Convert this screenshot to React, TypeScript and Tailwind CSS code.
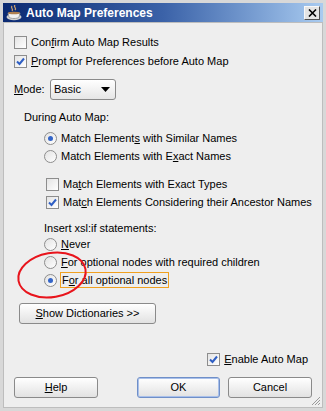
import React from 'react';

function Check({ checked }: { checked?: boolean }) {
  return (
    <div className="w-[13px] h-[13px] shrink-0 border border-[#8d8d8d] bg-gradient-to-br from-[#e4e4e4] to-white flex items-center justify-center">
      {checked && (
        <svg width="9" height="9" viewBox="0 0 9 9">
          <path d="M1 4.5 L3.5 7 L8 1.5" stroke="#2f5fc4" strokeWidth="2" fill="none" />
        </svg>
      )}
    </div>
  );
}

function Radio({ checked }: { checked?: boolean }) {
  return (
    <div className="w-[13px] h-[13px] shrink-0 rounded-full border border-[#8d8d8d] bg-gradient-to-br from-[#e2e2e2] to-white flex items-center justify-center">
      {checked && <div className="w-[5px] h-[5px] rounded-full bg-[#3465c8]" />}
    </div>
  );
}

function Btn({ children, w, ok }: { children: React.ReactNode; w: string; ok?: boolean }) {
  return (
    <div
      className={`${w} h-[21px] rounded-[3px] border ${ok ? 'border-[#6f8fc8] ring-1 ring-inset ring-[#a9c0ea]' : 'border-[#8a8a8a]'} bg-gradient-to-b from-white to-[#e2e2e2] flex items-center justify-center text-black`}
    >
      {children}
    </div>
  );
}

export default function App() {
  return (
    <div className="w-[326px] h-[411px] bg-[#d8d8d8] p-[3px] flex flex-col font-['Liberation_Sans',Arial,sans-serif] text-[11px] text-black leading-none select-none">
      {/* title bar */}
      <div className="h-[19px] shrink-0 flex items-center bg-gradient-to-r from-[#0b2a72] via-[#3b62a8] to-[#a9cbf0] pl-[2px] pr-[3px]">
        <svg width="18" height="16" viewBox="0 0 18 16" className="shrink-0">
          <path d="M7 1 C5 3 9 4 7 6" stroke="#c8a070" strokeWidth="1.3" fill="none" />
          <path d="M10 0 C8 2 12 3 10 5" stroke="#c8a070" strokeWidth="1.3" fill="none" />
          <ellipse cx="9" cy="12" rx="7.5" ry="3.2" fill="#d0d0d0" />
          <path d="M3 8 L15 8 L14 12 C13 14 5 14 4 12 Z" fill="#f2f2f2" stroke="#909090" strokeWidth="0.8" />
          <ellipse cx="9" cy="8" rx="6" ry="1.3" fill="#b08050" />
        </svg>
        <span className="ml-[3px] text-white font-bold text-[12px]">Auto Map Preferences</span>
        <div className="ml-auto w-[16px] h-[14px] bg-[#e4e4e4] border border-[#f8f8f8] border-r-[#505050] border-b-[#505050] flex items-center justify-center">
          <svg width="9" height="8" viewBox="0 0 9 8">
            <path d="M1 0.5 L8 7.5 M8 0.5 L1 7.5" stroke="#000" strokeWidth="1.6" />
          </svg>
        </div>
      </div>

      {/* body */}
      <div className="relative flex-1 bg-[#eeeeee] border border-[#bdbdbd] flex flex-col pt-[10px]">
        <div className="h-[19px] flex items-center pl-[10px] gap-[4px]">
          <Check />
          <span>Con<u>f</u>irm Auto Map Results</span>
        </div>
        <div className="h-[19px] flex items-center pl-[10px] gap-[4px]">
          <Check checked />
          <span><u>P</u>rompt for Preferences before Auto Map</span>
        </div>

        <div className="mt-[8px] flex items-center pl-[10px]">
          <span className="w-[36px]"><u>M</u>ode:</span>
          <div className="w-[66px] h-[21px] rounded-[3px] border border-[#8a8a8a] bg-gradient-to-b from-white to-[#e6e6e6] flex items-center pl-[3px] pr-[5px]">
            <span>Basic</span>
            <svg width="9" height="5" viewBox="0 0 9 5" className="ml-auto">
              <path d="M0 0 L9 0 L4.5 5 Z" fill="#000" />
            </svg>
          </div>
        </div>

        <div className="mt-[9px] h-[16px] flex items-center pl-[20px]">During Auto Map:</div>
        <div className="mt-[4px] h-[18px] flex items-center pl-[40px] gap-[4px]">
          <Radio checked />
          <span>Match Element<u>s</u> with Similar Names</span>
        </div>
        <div className="h-[18px] flex items-center pl-[40px] gap-[4px]">
          <Radio />
          <span>Match Elements with E<u>x</u>act Names</span>
        </div>

        <div className="mt-[10px] h-[18px] flex items-center pl-[42px] gap-[4px]">
          <Check />
          <span>Ma<u>t</u>ch Elements with Exact Types</span>
        </div>
        <div className="h-[18px] flex items-center pl-[42px] gap-[4px]">
          <Check checked />
          <span>Mat<u>c</u>h Elements Considering their Ancestor Names</span>
        </div>

        <div className="mt-[10px] h-[14px] flex items-center pl-[40px]">Insert xsl:if statements:</div>
        <div className="h-[18px] flex items-center pl-[40px] gap-[4px]">
          <Radio />
          <span><u>N</u>ever</span>
        </div>
        <div className="h-[18px] flex items-center pl-[40px] gap-[4px]">
          <Radio />
          <span><u>F</u>or optional nodes with required children</span>
        </div>
        <div className="h-[18px] flex items-center pl-[40px] gap-[3px]">
          <Radio checked />
          <span className="border border-[#f0a020] px-[1px] h-[16px] flex items-center">
            <span>F<u>o</u>r all optional nodes</span>
          </span>
        </div>

        <div className="mt-[14px] pl-[15px]">
          <Btn w="w-[137px]">
            <span><u>S</u>how Dictionaries &gt;&gt;</span>
          </Btn>
        </div>

        <div className="mt-[26px] h-[18px] flex items-center justify-end pr-[14px] gap-[4px]">
          <Check checked />
          <span><u>E</u>nable Auto Map</span>
        </div>

        <div className="mt-[9px] flex items-center pl-[10px] pr-[10px]">
          <Btn w="w-[84px]">
            <span><u>H</u>elp</span>
          </Btn>
          <div className="ml-auto flex gap-[8px]">
            <Btn w="w-[83px]" ok>
              <span>OK</span>
            </Btn>
            <Btn w="w-[84px]">
              <span>Cancel</span>
            </Btn>
          </div>
        </div>

        {/* red annotation ellipse */}
        <svg className="absolute left-[11px] top-[226px] pointer-events-none" width="74" height="52" viewBox="0 0 74 52">
          <ellipse cx="37" cy="26" rx="34" ry="22" transform="rotate(-10 37 26)" stroke="#e8141c" strokeWidth="2" fill="none" />
        </svg>

        {/* resize grip */}
        <svg className="absolute right-[1px] bottom-[1px]" width="11" height="11" viewBox="0 0 11 11">
          <path d="M10 2 L2 10 M10 5 L5 10 M10 8 L8 10" stroke="#9a9a9a" strokeWidth="1" />
        </svg>
      </div>
    </div>
  );
}
